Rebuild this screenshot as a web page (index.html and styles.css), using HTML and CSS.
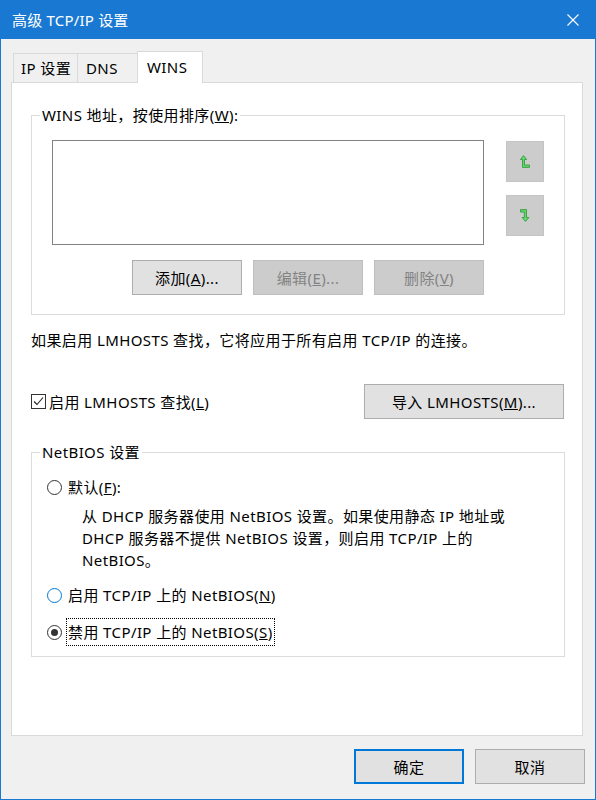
FILE: index.html
```html
<!DOCTYPE html>
<html lang="zh-CN">
<head>
<meta charset="utf-8">
<title>高级 TCP/IP 设置</title>
<link rel="stylesheet" href="styles.css">
</head>
<body>
<div class="window">
  <div class="titlebar">
    <span class="title">高级 TCP/IP 设置</span>
    <svg class="close" width="12" height="12" viewBox="0 0 12 12"><path d="M0.5 0.5 L11.5 11.5 M11.5 0.5 L0.5 11.5" stroke="#fff" stroke-width="1.1" fill="none"/></svg>
  </div>
  <div class="tabs">
    <div class="tab tab-ip">IP 设置</div>
    <div class="tab tab-dns">DNS</div>
    <div class="tab tab-wins active">WINS</div>
  </div>
  <div class="panel">
    <fieldset class="group">
      <legend>WINS 地址，按使用排序(<u>W</u>):</legend>
      <div class="group-inner wins-inner">
        <div class="wins-row">
          <div class="listbox"></div>
          <div class="order-btns">
            <div class="order-btn">
              <svg width="10" height="13" viewBox="0 0 10 13"><path d="M3.5 0.6 L6.6 4.5 L4.5 4.5 L4.5 10 L9.5 10 L9.5 12.4 L2.5 12.4 L2.5 4.5 L0.4 4.5 Z" fill="#6bd46b" stroke="#2f9f3f" stroke-width="0.9" stroke-linejoin="miter"/></svg>
            </div>
            <div class="order-btn">
              <svg width="10" height="13" viewBox="0 0 10 13"><path d="M0.5 0.6 L6.5 0.6 L6.5 8.5 L8.9 8.5 L5.5 12.4 L2.1 8.5 L4.3 8.5 L4.3 3 L0.5 3 Z" fill="#6bd46b" stroke="#2f9f3f" stroke-width="0.9" stroke-linejoin="miter"/></svg>
            </div>
          </div>
        </div>
        <div class="btn-row">
          <button class="btn">添加(<u>A</u>)...</button>
          <button class="btn disabled">编辑(<u>E</u>)...</button>
          <button class="btn disabled">删除(<u>V</u>)</button>
        </div>
      </div>
    </fieldset>
    <p class="note">如果启用 LMHOSTS 查找，它将应用于所有启用 TCP/IP 的连接。</p>
    <div class="lm-row">
      <label class="check">
        <span class="checkbox"><svg width="13" height="13" viewBox="0 0 13 13"><path d="M2 6.5 L5 9.5 L11 2.5" stroke="#222" stroke-width="1.1" fill="none"/></svg></span>
        <span>启用 LMHOSTS 查找(<u>L</u>)</span>
      </label>
      <button class="btn btn-import">导入 LMHOSTS(<u>M</u>)...</button>
    </div>
    <fieldset class="group group-netbios">
      <legend>NetBIOS 设置</legend>
      <div class="group-inner netbios-inner">
        <div class="radio-row">
          <span class="radio"></span>
          <span class="rlabel">默认(<u>F</u>):</span>
        </div>
        <p class="desc">从 DHCP 服务器使用 NetBIOS 设置。如果使用静态 IP 地址或<br>DHCP 服务器不提供 NetBIOS 设置，则启用 TCP/IP 上的<br>NetBIOS。</p>
        <div class="radio-row row-enable">
          <span class="radio hover"></span>
          <span class="rlabel">启用 TCP/IP 上的 NetBIOS(<u>N</u>)</span>
        </div>
        <div class="radio-row row-disable">
          <span class="radio checked"></span>
          <span class="rlabel focus">禁用 TCP/IP 上的 NetBIOS(<u>S</u>)</span>
        </div>
      </div>
    </fieldset>
  </div>
  <div class="footer">
    <button class="btn btn-default">确定</button>
    <button class="btn">取消</button>
  </div>
</div>
</body>
</html>
```

FILE: styles.css
```css
html, body {
  margin: 0;
  padding: 0;
}

body {
  font-family: "Noto Sans", "Noto Sans CJK SC", sans-serif;
  font-size: 15px;
  letter-spacing: 0.4px;
  color: #000;
  background: #f0f0f0;
}

.window {
  width: 596px;
  height: 800px;
  box-sizing: border-box;
  border: 1px solid #1979d2;
  border-top: 0;
  background: #f0f0f0;
  display: flex;
  flex-direction: column;
}

.titlebar {
  flex: none;
  height: 39px;
  background: #1979d2;
  color: #fff;
  display: flex;
  align-items: center;
  justify-content: space-between;
  padding: 0 16px 0 11px;
  line-height: 20px;
  letter-spacing: 0.2px;
}

.close {
  display: block;
}

.tabs {
  flex: none;
  display: flex;
  align-items: flex-end;
  height: 31px;
  padding-top: 12px;
  margin-left: 12px;
}

.tab {
  box-sizing: border-box;
  height: 29px;
  border: 1px solid #d9d9d9;
  border-bottom: 0;
  padding-top: 1px;
  line-height: 27px;
  background: #f0f0f0;
  white-space: nowrap;
}

.tab + .tab {
  margin-left: -1px;
}

.tab-ip {
  width: 65px;
  padding-left: 7px;
}

.tab-dns {
  width: 61px;
  padding-left: 8px;
}

.tab-wins {
  width: 66px;
  padding-left: 9px;
}

.tab.active {
  height: 32px;
  margin-bottom: -1px;
  padding-top: 0;
  line-height: 30px;
  background: #fff;
  position: relative;
  z-index: 1;
}

.panel {
  flex: none;
  margin-left: 10px;
  width: 572px;
  height: 654px;
  box-sizing: border-box;
  border: 1px solid #d9d9d9;
  background: #fff;
  padding: 22px 17px 0 19px;
}

.group {
  margin: 0;
  padding: 0;
  border: 1px solid #dcdcdc;
  min-width: 0;
}

.group legend {
  margin-left: 8px;
  padding: 0 2px;
  line-height: 20px;
}

.wins-inner {
  padding: 15px 20px 19px 20px;
}

.wins-row {
  display: flex;
  gap: 22px;
}

.listbox {
  width: 432px;
  height: 105px;
  box-sizing: border-box;
  border: 1px solid #828282;
  background: #fff;
}

.order-btns {
  display: flex;
  flex-direction: column;
  gap: 13px;
  padding-top: 1px;
}

.order-btn {
  width: 38px;
  height: 41px;
  box-sizing: border-box;
  background: #cccccc;
  border: 1px solid #c4c4c4;
  display: flex;
  align-items: center;
  justify-content: center;
}

.order-btn svg {
  display: block;
}

.btn-row {
  width: 432px;
  margin-top: 15px;
  display: flex;
  justify-content: flex-end;
  gap: 11px;
}

.btn {
  width: 110px;
  height: 35px;
  box-sizing: border-box;
  border: 1px solid #adadad;
  background: #e1e1e1;
  font: inherit;
  letter-spacing: inherit;
  color: #000;
  padding: 0;
  margin: 0;
  line-height: 20px;
}

.btn.disabled {
  background: #cccccc;
  border-color: #bfbfbf;
  color: #838383;
}

.btn-default {
  border: 2px solid #0078d7;
}

.btn-import {
  width: 200px;
  margin-right: 1px;
}

.note {
  margin: 15px 0 0 0;
  line-height: 20px;
  white-space: nowrap;
}

.lm-row {
  margin-top: 34px;
  height: 35px;
  display: flex;
  align-items: center;
  justify-content: space-between;
}

.check {
  display: flex;
  align-items: center;
  gap: 3px;
  line-height: 20px;
}

.checkbox {
  width: 15px;
  height: 15px;
  box-sizing: border-box;
  border: 1px solid #333;
  background: #fff;
  display: flex;
  align-items: center;
  justify-content: center;
}

.checkbox svg {
  display: block;
}

.group-netbios {
  margin-top: 23px;
}

.netbios-inner {
  padding: 11px 20px 10px 15px;
}

.radio-row {
  height: 28px;
  display: flex;
  align-items: center;
}

.radio {
  width: 15px;
  height: 15px;
  box-sizing: border-box;
  border: 1px solid #333;
  border-radius: 50%;
  background: #fff;
  margin-right: 4px;
  display: flex;
  align-items: center;
  justify-content: center;
}

.radio.hover {
  border-color: #0078d7;
}

.radio.checked::after {
  content: "";
  width: 7px;
  height: 7px;
  border-radius: 50%;
  background: #333;
}

.rlabel {
  box-sizing: border-box;
  height: 28px;
  line-height: 26px;
  border: 1px solid transparent;
  padding: 0 1px;
  white-space: nowrap;
}

.rlabel.focus {
  border: 1px dotted #000;
}

.desc {
  margin: 4px 0 0 35px;
  line-height: 22px;
  white-space: nowrap;
}

.row-enable {
  margin-top: 10px;
}

.row-disable {
  margin-top: 9px;
}

.footer {
  flex: none;
  display: flex;
  justify-content: flex-end;
  gap: 11px;
  padding: 13px 10px 0 0;
}
```
